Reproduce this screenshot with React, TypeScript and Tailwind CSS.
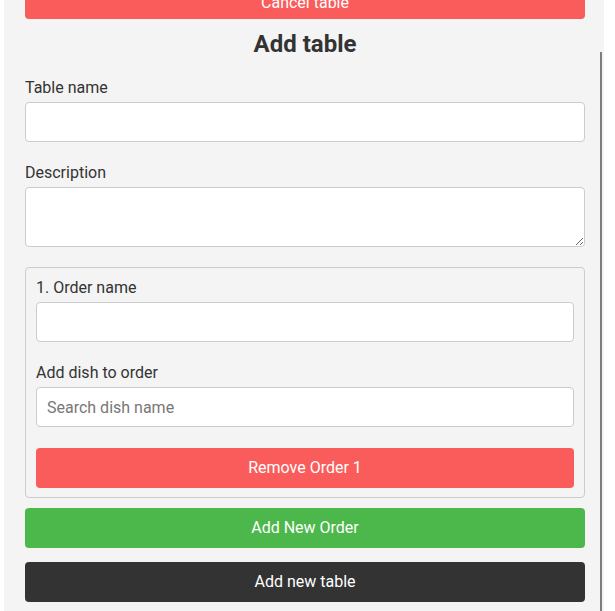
import React from "react";

const Label: React.FC<{ text: string }> = ({ text }) => (
  <label className="block text-[16px] leading-[19px] text-[#333] mb-[5px]">{text}</label>
);

const inputClass =
  "block w-full h-[40px] rounded-[4px] border border-[#ccc] bg-white px-[10px] text-[16px] text-[#333] placeholder:text-[#777] outline-none";

const App: React.FC = () => {
  return (
    <div
      className="relative w-[615px] h-[611px] overflow-hidden bg-white"
      style={{ fontFamily: "Roboto, 'Liberation Sans', sans-serif" }}
    >
      <div className="ml-[4px] mt-[2px] w-[600px] h-[640px] rounded-t-[10px] bg-[#f4f4f4] pl-[21px] pr-[19px]">
        <button className="-mt-[23px] block w-full h-[40px] rounded-[4px] bg-[#fa5b5b] pt-[7px] text-white text-[16px]">
          Cancel table
        </button>
        <h2 className="mt-[11px] mb-[20px] text-center text-[24px] leading-[28px] font-bold text-[#333]">
          Add table
        </h2>
        <div className="mb-[21px]">
          <Label text="Table name" />
          <input className={inputClass} />
        </div>
        <div className="mb-[20px]">
          <Label text="Description" />
          <textarea className="block w-full h-[60px] rounded-[4px] border border-[#ccc] bg-white px-[10px] outline-none" />
        </div>
        <div className="rounded-[4px] border border-[#ccc] px-[10px] pt-[10px] pb-[9px]">
          <div className="mb-[21px]">
            <Label text="1. Order name" />
            <input className={inputClass} />
          </div>
          <div className="mb-[21px]">
            <Label text="Add dish to order" />
            <input className={inputClass} placeholder="Search dish name" />
          </div>
          <button className="block w-full h-[40px] rounded-[4px] bg-[#fa5b5b] text-white text-[16px]">
            Remove Order 1
          </button>
        </div>
        <button className="mt-[10px] block w-full h-[40px] rounded-[4px] bg-[#4cb84c] text-white text-[16px]">
          Add New Order
        </button>
        <button className="mt-[14px] block w-full h-[40px] rounded-[4px] bg-[#333] text-white text-[16px]">
          Add new table
        </button>
      </div>
      <div className="absolute left-[600px] top-[52px] w-[2px] h-[560px] bg-[#7d7d7d]" />
    </div>
  );
};

export default App;
